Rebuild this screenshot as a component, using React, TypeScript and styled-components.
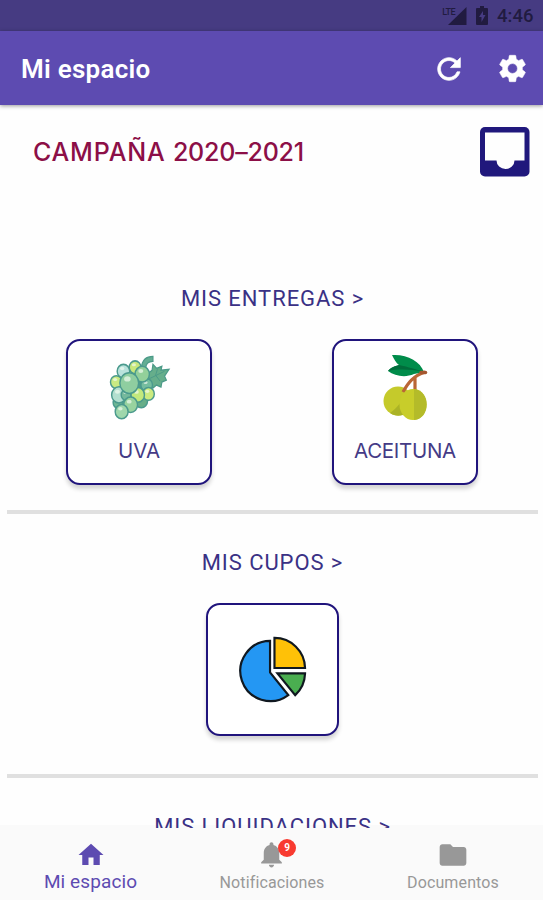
import React from "react";
import styled, { createGlobalStyle } from "styled-components";

const Global = createGlobalStyle`
  * { box-sizing: border-box; }
  body { margin: 0; background: #fff; }
`;

const Screen = styled.div`
  width: 543px;
  height: 900px;
  display: flex;
  flex-direction: column;
  overflow: hidden;
  background: #fefefe;
  font-family: Roboto, sans-serif;
`;

const StatusBar = styled.header`
  height: 31px;
  flex: none;
  display: flex;
  align-items: center;
  justify-content: flex-end;
  padding-right: 9px;
  background: #463b82;
  color: #211b40;
`;

const Network = styled.span`
  font-size: 9px;
  line-height: 10px;
  height: 18px;
  font-weight: 500;
  letter-spacing: -0.5px;
  margin-right: -7px;
`;

const Clock = styled.time`
  width: 37px;
  margin-left: 9px;
  font-size: 18.5px;
  font-weight: 500;
  line-height: 31px;
  padding-top: 2px;
`;

const StatusIcon = styled.svg<{ $gap?: number }>`
  margin-left: ${(p) => p.$gap ?? 0}px;
  display: block;
`;

const AppBar = styled.div`
  height: 74px;
  flex: none;
  display: flex;
  align-items: center;
  padding: 1px 14px 0 21px;
  background: #5d4bb1;
  color: #fff;
  box-shadow: 0 1px 4px rgba(0, 0, 0, 0.4);
  z-index: 2;
`;

const Title = styled.h1`
  flex: 1;
  margin: 0;
  padding-top: 1px;
  font-size: 26px;
  font-weight: 600;
  letter-spacing: 0.25px;
`;

const BarButton = styled.button<{ $gap?: number }>`
  border: 0;
  padding: 0;
  background: none;
  color: inherit;
  display: flex;
  margin-left: ${(p) => p.$gap ?? 0}px;
`;

const Content = styled.main`
  height: 723px;
  flex: none;
  overflow: hidden;
  position: relative;
  z-index: 1;
`;

const Campaign = styled.div`
  height: 165px;
  display: flex;
  justify-content: space-between;
  align-items: flex-start;
  padding: 17px 5px 0 33px;
`;

const CampaignName = styled.h2`
  margin: 13px 0 0;
  font: 500 25px/34px Inter, sans-serif;
  letter-spacing: 0.8px;
  color: #8c0f47;
`;

const Years = styled.span`
  letter-spacing: -0.2px;
`;

const Section = styled.section<{ $height: number; $top?: number }>`
  height: ${(p) => p.$height}px;
  margin: 0 5px 0 7px;
  padding-top: ${(p) => p.$top ?? 33}px;
  border-bottom: 4px solid #e0e0e0;
  display: flex;
  flex-direction: column;
  align-items: center;
`;

const SectionTitle = styled.h3`
  margin: 0 0 25px;
  height: 31px;
  font-size: 22px;
  line-height: 32px;
  font-weight: 400;
  letter-spacing: 0.93px;
  color: #3a3185;
  white-space: nowrap;
`;

const Cards = styled.div`
  width: 100%;
  display: flex;
  justify-content: space-between;
  padding: 0 60px 0 59px;
`;

const Card = styled.div<{ $size: number }>`
  width: ${(p) => p.$size}px;
  height: ${(p) => p.$size}px;
  flex: none;
  border: 2px solid #20147c;
  border-radius: 14px;
  background: #fff;
  box-shadow: 0 4px 4px rgba(0, 0, 0, 0.17);
  display: flex;
  flex-direction: column;
  align-items: center;
  justify-content: ${(p) => (p.$size < 140 ? "center" : "flex-start")};
  padding-top: ${(p) => (p.$size < 140 ? 0 : 12)}px;
`;

const CardLabel = styled.span<{ $track?: number }>`
  margin-top: 14px;
  font: 400 20.5px/28px Inter, sans-serif;
  letter-spacing: ${(p) => p.$track ?? 0}px;
  color: #453b86;
`;

const Nav = styled.nav`
  height: 72px;
  flex: none;
  display: grid;
  grid-template-columns: repeat(3, 1fr);
  background: #fafafa;
  box-shadow: 0 -3px 0 #fafafa;
`;

const Tab = styled.a<{ $active?: boolean }>`
  display: flex;
  flex-direction: column;
  align-items: center;
  padding-top: 11px;
  color: ${(p) => (p.$active ? "#5d4bb1" : "#989898")};
`;

const TabIcon = styled.span<{ $lower?: boolean }>`
  position: relative;
  height: 32px;
  display: flex;
  padding-top: ${(p) => (p.$lower ? 1 : 0)}px;
`;

const TabLabel = styled.span<{ $active?: boolean }>`
  font-size: ${(p) => (p.$active ? 19 : 16)}px;
  line-height: 22px;
  letter-spacing: ${(p) => (p.$active ? 0.1 : 0.13)}px;
  margin-top: ${(p) => (p.$active ? 0 : 1)}px;
  padding-left: ${(p) => (p.$active ? 0 : 1)}px;
`;

const Badge = styled.span`
  position: absolute;
  left: 22px;
  top: 0;
  width: 18px;
  height: 18px;
  border-radius: 50%;
  background: #f83a30;
  color: #fff;
  font-size: 10px;
  font-weight: 700;
  line-height: 18px;
  text-align: center;
`;

const Glyph = ({ d, size, stroke = 0 }: { d: string; size: number; stroke?: number }) => (
  <svg width={size} height={size} viewBox="0 0 24 24" fill="currentColor" stroke="currentColor" strokeWidth={stroke}>
    <path d={d} />
  </svg>
);

const REFRESH =
  "M17.65 6.35C16.2 4.9 14.21 4 12 4c-4.42 0-7.99 3.58-7.99 8s3.57 8 7.99 8c3.73 0 6.84-2.55 7.73-6h-2.08c-.82 2.33-3.04 4-5.65 4-3.31 0-6-2.69-6-6s2.69-6 6-6c1.66 0 3.14.69 4.22 1.78L13 11h7V4l-2.35 2.35z";
const GEAR =
  "M19.14 12.94c.04-.3.06-.61.06-.94 0-.32-.02-.64-.07-.94l2.03-1.58c.18-.14.23-.41.12-.61l-1.92-3.32c-.12-.22-.37-.29-.59-.22l-2.39.96c-.5-.38-1.03-.7-1.62-.94l-.36-2.54c-.04-.24-.24-.41-.48-.41h-3.84c-.24 0-.43.17-.47.41l-.36 2.54c-.59.24-1.13.57-1.62.94l-2.39-.96c-.22-.08-.47 0-.59.22L2.74 8.87c-.12.21-.08.47.12.61l2.03 1.58c-.05.3-.09.63-.09.94s.02.64.07.94l-2.03 1.58c-.18.14-.23.41-.12.61l1.92 3.32c.12.22.37.29.59.22l2.39-.96c.5.38 1.03.7 1.62.94l.36 2.54c.05.24.24.41.48.41h3.84c.24 0 .44-.17.47-.41l.36-2.54c.59-.24 1.13-.56 1.62-.94l2.39.96c.22.08.47 0 .59-.22l1.92-3.32c.12-.22.07-.47-.12-.61l-2.01-1.58zM12 15.6c-1.98 0-3.6-1.62-3.6-3.6s1.62-3.6 3.6-3.6 3.6 1.62 3.6 3.6-1.62 3.6-3.6 3.6z";
const HOME = "M10 20v-6h4v6h5v-8h3L12 3 2 12h3v8z";
const BELL =
  "M12 22c1.1 0 2-.9 2-2h-4c0 1.1.89 2 2 2zm6-6v-5c0-3.07-1.64-5.64-4.5-6.32V4c0-.83-.67-1.5-1.5-1.5s-1.5.67-1.5 1.5v.68C7.63 5.36 6 7.92 6 11v5l-2 2v1h16v-1l-2-2z";
const FOLDER =
  "M10 4H4c-1.1 0-1.99.9-1.99 2L2 18c0 1.1.9 2 2 2h16c1.1 0 2-.9 2-2V8c0-1.1-.9-2-2-2h-8l-2-2z";

const Inbox = () => (
  <svg width="66" height="60" viewBox="0 0 66 60">
    <rect x="8" y="5" width="49.500" height="49.500" rx="5" fill="#20187c" />
    <path d="M13 10.500h39.500v28H42.500a9 8.500 0 0 1-18 0H13z" fill="#fefefe" />
  </svg>
);

/* Berries from back to front: centre x, centre y, radius, colour. */
const GRAPES: [number, number, number, string][] = [
  [10, 49, 5.5, "#6fb894"],
  [36, 47, 7, "#67ae88"],
  [42, 31, 6.5, "#75bd9f"],
  [16, 17, 7, "#b9e2dc"],
  [29, 13, 6.5, "#c8e87c"],
  [8, 28, 6.5, "#c9ea82"],
  [11, 41, 8.2, "#b3dfcf"],
  [19, 41, 5.5, "#75b99c"],
  [37, 20, 8, "#93d09a"],
  [44, 40, 6.5, "#cceb80"],
  [32, 41, 7.5, "#c2e97d"],
  [24, 51, 7.8, "#98d39f"],
  [14, 58, 7.2, "#9fd7ac"],
  [22.5, 29, 10.5, "#8fcea0"],
];

const Grapes = () => (
  <svg width="66" height="70" viewBox="-3.500 -1.500 73.800 71" preserveAspectRatio="none">
    <path d="M28 20 42 14 46 36 38 50 12 54 9 28z" fill="#4f9d8b" />
    <path d="M36 13c1-7 5-11 13-11v5c-5 0-8 2-8 7z" fill="#63ae93" stroke="#4b9a88" strokeWidth="1.300" />
    <path d="m42 20 6-4 1-6 4 4 6-2-1 4 9-1-5 7 2 4-5 2-1 5-5-2-4 3-3-4-4 0z" fill="#66ae8b" stroke="#4b9a88" strokeWidth="1.300" />
    <path d="M44 25 62 17M52 21l2-6M52 21l5 6" fill="none" stroke="#4b9a88" />
    {GRAPES.map(([x, y, r, fill], i) => (
      <g key={i}>
        <circle cx={x} cy={y} r={r} fill={fill} stroke="#4b9a8d" strokeWidth="1.600" />
        <ellipse cx={x - r * 0.2} cy={y - r * 0.4} rx={r * 0.35} ry={r * 0.25} fill="#f1fbef" opacity="0.7" />
      </g>
    ))}
  </svg>
);

const Olives = () => (
  <svg width="50" height="70" viewBox="-1 0 50 70">
    <circle cx="17" cy="48" r="14.500" fill="#c5ca2b" />
    <path d="M9 60c7-5 12-11 15-20l7 11-5 9c-5 3-11 4-17 0z" fill="#abb326" />
    <path d="M44 19C32 23 27 30 22 39M34 24v17" fill="none" stroke="#ba6636" strokeWidth="3.200" />
    <ellipse cx="32" cy="51.500" rx="13.500" ry="15.500" fill="#c8cd2a" />
    <path d="M33 36c17 1 17 30 0 31z" fill="#b4bb29" />
    <path d="M43 19C39 8 26 1 11 2c2 4 4 8 7 10-4 1-9 3-11 6 7 5 17 7 26 3z" fill="#008c4a" />
    <path d="M43 19C31 15 23 13 18 12c-4 1-9 3-11 6 10-2 22-2 36 1z" fill="#006d3b" />
    <path d="M40 19.500h4.500" stroke="#a4572f" strokeWidth="3.500" strokeLinecap="round" />
  </svg>
);

const Pie = () => (
  <svg width="70" height="70" viewBox="-1 0 71 71" stroke="#101820" strokeWidth="2.200">
    <path d="M31.500 6v32L50 61A30.500 30.500 0 1 1 31.500 6z" fill="#2497f3" />
    <path d="M36 3v30.500h31A31 31 0 0 0 36 3z" fill="#ffc107" />
    <path d="M39 39h28a31 31 0 0 1-10 22z" fill="#4aae50" />
  </svg>
);

export default function App() {
  return (
    <>
      <Global />
      <Screen>
        <StatusBar>
          <Network>LTE</Network>
          <StatusIcon width="19" height="18" viewBox="0 0 19 18">
            <path d="M18.500 0v18H0z" fill="currentColor" />
          </StatusIcon>
          <StatusIcon $gap={9} width="12" height="19" viewBox="0 0 12 19">
            <path d="M4 0h4v2h3q1 0 1 1v15q0 1-1 1H1q-1 0-1-1V3q0-1 1-1h3z" fill="currentColor" />
            <path d="M7 5 3 11h2.500v5L9.500 9H7z" fill="#463b82" />
          </StatusIcon>
          <Clock>4:46</Clock>
        </StatusBar>
        <AppBar>
          <Title>Mi espacio</Title>
          <BarButton aria-label="Actualizar">
            <Glyph d={REFRESH} size={34} stroke={0.5} />
          </BarButton>
          <BarButton aria-label="Ajustes" $gap={30}>
            <Glyph d={GEAR} size={33} stroke={0.4} />
          </BarButton>
        </AppBar>
        <Content>
          <Campaign>
            <CampaignName>
              CAMPAÑA <Years>2020–2021</Years>
            </CampaignName>
            <Inbox />
          </Campaign>
          <Section $height={244} $top={13}>
            <SectionTitle>MIS ENTREGAS &gt;</SectionTitle>
            <Cards>
              <Card $size={146}>
                <Grapes />
                <CardLabel>UVA</CardLabel>
              </Card>
              <Card $size={146}>
                <Olives />
                <CardLabel $track={-0.3}>ACEITUNA</CardLabel>
              </Card>
            </Cards>
          </Section>
          <Section $height={264}>
            <SectionTitle>MIS CUPOS &gt;</SectionTitle>
            <Card $size={133}>
              <Pie />
            </Card>
          </Section>
          <Section $height={200}>
            <SectionTitle>MIS LIQUIDACIONES &gt;</SectionTitle>
          </Section>
        </Content>
        <Nav>
          <Tab $active>
            <TabIcon $lower><Glyph d={HOME} size={30} /></TabIcon>
            <TabLabel $active>Mi espacio</TabLabel>
          </Tab>
          <Tab>
            <TabIcon>
              <Glyph d={BELL} size={31} />
              <Badge>9</Badge>
            </TabIcon>
            <TabLabel>Notificaciones</TabLabel>
          </Tab>
          <Tab>
            <TabIcon><Glyph d={FOLDER} size={32} /></TabIcon>
            <TabLabel>Documentos</TabLabel>
          </Tab>
        </Nav>
      </Screen>
    </>
  );
}
